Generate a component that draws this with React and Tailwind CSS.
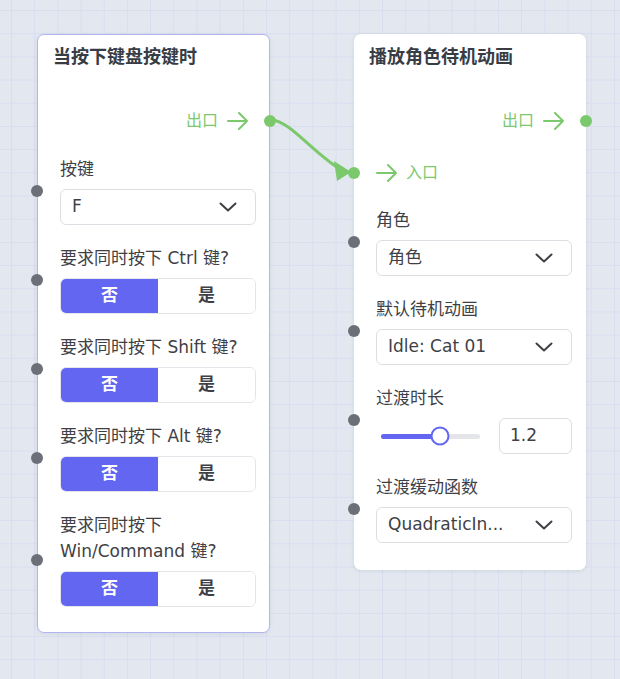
import React from "react";

const GREEN = "#7cc96d";

function Arrow() {
  return (
    <svg width="22" height="18" viewBox="0 0 22 18" fill="none" stroke={GREEN} strokeWidth="2" strokeLinecap="round" strokeLinejoin="round">
      <path d="M1 9H20M12 1L20 9L12 17" />
    </svg>
  );
}

function Chevron() {
  return (
    <svg width="18" height="10" viewBox="0 0 18 10" fill="none" stroke="#3f3f46" strokeWidth="2" strokeLinecap="round" strokeLinejoin="round">
      <path d="M1.5 1.5L9 8.5L16.5 1.5" />
    </svg>
  );
}

function Select({ value }) {
  return (
    <div className="flex h-[36px] items-center justify-between rounded-[6px] border border-[#dcdee3] bg-white pl-[11px] pr-[18px] text-[17px] text-[#3f3f46]">
      <span className="whitespace-nowrap">{value}</span>
      <Chevron />
    </div>
  );
}

function Toggle() {
  return (
    <div className="grid h-[36px] grid-cols-[97px_1fr] overflow-hidden rounded-[6px] border border-[#e3e5ea] text-[17px] font-bold">
      <div className="flex items-center justify-center bg-[#6366f1] text-white">否</div>
      <div className="flex items-center justify-center bg-white text-[#3f3f46]">是</div>
    </div>
  );
}

function Field({ label, children, dotLeft }) {
  return (
    <div className="relative flex flex-col">
      <div className="text-[17px] leading-[26px] text-[#3f3f46]">{label}</div>
      <div className="mt-[7px]">{children}</div>
      <span className={`absolute top-1/2 h-[12px] w-[12px] -translate-y-1/2 rounded-full bg-[#6b7078] ${dotLeft}`} />
    </div>
  );
}

function OutRow({ dotRight }) {
  return (
    <div className="relative mt-[40px] flex h-[24px] items-center justify-end gap-[9px] pr-[7px] text-[16px] text-[#7cc96d]">
      <span>出口</span>
      <Arrow />
      <span className={`absolute top-1/2 h-[12px] w-[12px] -translate-y-1/2 rounded-full bg-[#7cc96d] ${dotRight}`} />
    </div>
  );
}

export default function App() {
  return (
    <div className="relative h-[679px] w-[620px] overflow-hidden bg-[#e3e8f0] bg-[linear-gradient(to_right,#d9ddf0_1px,transparent_1px),linear-gradient(to_bottom,#d9ddf0_1px,transparent_1px)] bg-[size:23.2px_23.2px] bg-[position:11px_10px] font-['DejaVu_Sans','Noto_Sans_CJK_SC',sans-serif]">
      {/* Left node */}
      <div className="absolute left-[37px] top-[34px] w-[233px] rounded-[7px] border border-[#b3b5f0] bg-white pb-[25px] shadow-[0_1px_4px_rgba(30,40,80,0.08)]">
        <div className="pl-[15px] pt-[10px] text-[18px] font-bold leading-[24px] text-[#383d45]">当按下键盘按键时</div>
        <div className="pl-[22px] pr-[13px]">
          <OutRow dotRight="right-[-20px]" />
          <div className="mt-[23px] flex flex-col gap-[20px]">
            <Field label="按键" dotLeft="left-[-29px]">
              <Select value="F" />
            </Field>
            <Field label="要求同时按下 Ctrl 键?" dotLeft="left-[-29px]">
              <Toggle />
            </Field>
            <Field label="要求同时按下 Shift 键?" dotLeft="left-[-29px]">
              <Toggle />
            </Field>
            <Field label="要求同时按下 Alt 键?" dotLeft="left-[-29px]">
              <Toggle />
            </Field>
            <Field label={<>要求同时按下<br />Win/Command 键?</>} dotLeft="left-[-29px]">
              <Toggle />
            </Field>
          </div>
        </div>
      </div>

      {/* Right node */}
      <div className="absolute left-[354px] top-[34px] w-[232px] rounded-[7px] bg-white pb-[27px] shadow-[0_1px_4px_rgba(30,40,80,0.1)]">
        <div className="pl-[15px] pt-[11px] text-[18px] font-bold leading-[24px] text-[#383d45]">播放角色待机动画</div>
        <div className="pl-[22px] pr-[14px]">
          <OutRow dotRight="right-[-20px]" />
          <div className="relative mt-[28px] flex h-[24px] items-center gap-[8px] text-[16px] text-[#7cc96d]">
            <Arrow />
            <span>入口</span>
            <span className="absolute left-[-28px] top-1/2 h-[12px] w-[12px] -translate-y-1/2 rounded-full bg-[#7cc96d]" />
          </div>
          <div className="mt-[22px] flex flex-col gap-[20px]">
            <Field label="角色" dotLeft="left-[-28px]">
              <Select value="角色" />
            </Field>
            <Field label="默认待机动画" dotLeft="left-[-28px]">
              <Select value="Idle: Cat 01" />
            </Field>
            <Field label="过渡时长" dotLeft="left-[-28px]">
              <div className="flex items-center gap-[14px]">
                <div className="w-[109px] px-[5px]">
                  <div className="relative h-[5px] rounded-full bg-[#e4e5e9]">
                    <div className="h-full w-[60%] rounded-full bg-[#6366f1]" />
                    <span className="absolute left-[60%] top-1/2 h-[19px] w-[19px] -translate-x-1/2 -translate-y-1/2 rounded-full border-2 border-[#6366f1] bg-white" />
                  </div>
                </div>
                <div className="flex h-[36px] w-[73px] items-center rounded-[6px] border border-[#dcdee3] pl-[10px] text-[17px] text-[#3f3f46]">1.2</div>
              </div>
            </Field>
            <Field label="过渡缓动函数" dotLeft="left-[-28px]">
              <Select value="QuadraticIn..." />
            </Field>
          </div>
        </div>
      </div>

      {/* Edge */}
      <svg className="pointer-events-none absolute left-0 top-0" width="620" height="679" viewBox="0 0 620 679">
        <path d="M270 119 C292 123 306 146 338 168" fill="none" stroke={GREEN} strokeWidth="3" strokeLinecap="round" />
        <polygon points="334,161 337,181 351,172" fill={GREEN} />
      </svg>
    </div>
  );
}
